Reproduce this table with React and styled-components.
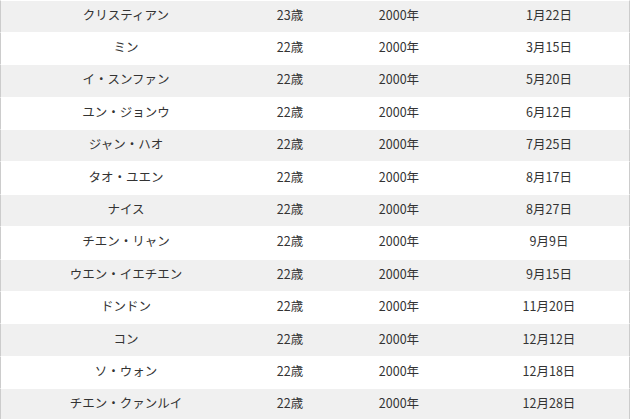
import React from "react";
import styled, { createGlobalStyle } from "styled-components";

const GlobalStyle = createGlobalStyle`
  html, body {
    margin: 0;
    padding: 0;
    background: #ffffff;
  }
  body {
    font-family: "Noto Sans CJK JP", "Noto Sans", sans-serif;
    color: #333333;
  }
`;

const Table = styled.div`
  width: 630px;
  margin-top: -0.5px;
`;

const Row = styled.div`
  display: grid;
  grid-template-columns: 250px 78px 140px 1fr;
  align-items: center;
  box-sizing: border-box;
  height: 32.4px;
  border-top: 1px solid #ffffff;
  border-left: 1px solid #cccccc;
  border-right: 1px solid #cccccc;
  background: ${(p) => (p.$striped ? "#f0f0f0" : "#ffffff")};
`;

const Cell = styled.div`
  text-align: center;
  font-size: 12.5px;
  line-height: 16px;
  margin-bottom: 3px;
  white-space: nowrap;
`;

const members = [
  ["クリスティアン", "23歳", "2000年", "1月22日"],
  ["ミン", "22歳", "2000年", "3月15日"],
  ["イ・スンファン", "22歳", "2000年", "5月20日"],
  ["ユン・ジョンウ", "22歳", "2000年", "6月12日"],
  ["ジャン・ハオ", "22歳", "2000年", "7月25日"],
  ["タオ・ユエン", "22歳", "2000年", "8月17日"],
  ["ナイス", "22歳", "2000年", "8月27日"],
  ["チエン・リャン", "22歳", "2000年", "9月9日"],
  ["ウエン・イエチエン", "22歳", "2000年", "9月15日"],
  ["ドンドン", "22歳", "2000年", "11月20日"],
  ["コン", "22歳", "2000年", "12月12日"],
  ["ソ・ウォン", "22歳", "2000年", "12月18日"],
  ["チエン・クァンルイ", "22歳", "2000年", "12月28日"],
];

export default function App() {
  return (
    <>
      <GlobalStyle />
      <Table>
        {members.map((m, i) => (
          <Row key={m[0]} $striped={i % 2 === 0}>
            {m.map((v, j) => (
              <Cell key={j}>{v}</Cell>
            ))}
          </Row>
        ))}
      </Table>
    </>
  );
}
